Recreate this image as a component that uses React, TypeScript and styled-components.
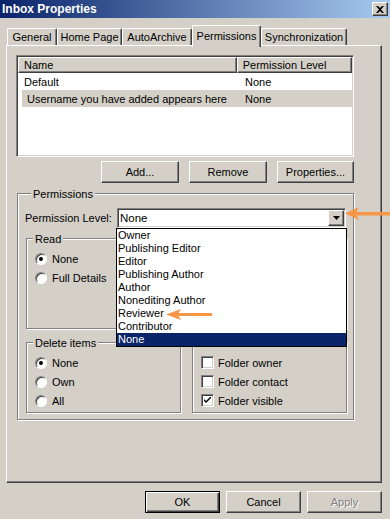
import React from 'react'
import styled, { createGlobalStyle, css } from 'styled-components'

const FACE = '#d4d0c8'
const SHADOW = '#808080'
const DARK = '#404040'
const NAVY = '#0a246a'
const ORANGE = '#f79646'

const GlobalStyle = createGlobalStyle`
  html, body {
    margin: 0;
    padding: 0;
    background: ${FACE};
  }
  body {
    font-family: "Liberation Sans", Arial, sans-serif;
    font-size: 11px;
    color: #000;
  }
`

const raised = css`
  border: 1px solid;
  border-color: #fff ${DARK} ${DARK} #fff;
  box-shadow: inset -1px -1px ${SHADOW};
  background: ${FACE};
`

const sunken = css`
  border: 1px solid;
  border-color: ${SHADOW} #fff #fff ${SHADOW};
  box-shadow: inset 1px 1px ${DARK}, inset -1px -1px ${FACE};
`

const Window = styled.div`
  position: relative;
  width: 390px;
  height: 519px;
  overflow: hidden;
  background: ${FACE};
`

const TitleBar = styled.div`
  height: 18px;
  box-sizing: border-box;
  padding: 0 2px;
  display: flex;
  align-items: center;
  justify-content: space-between;
  background: linear-gradient(90deg, ${NAVY} 0%, #a6caf0 100%);
`

const Title = styled.div`
  color: #fff;
  font-weight: bold;
  font-size: 12px;
`

const CloseBtn = styled.div`
  ${raised}
  width: 16px;
  height: 14px;
  box-sizing: border-box;
  display: flex;
  align-items: center;
  justify-content: center;
`

const TabStrip = styled.div`
  display: flex;
  align-items: flex-end;
  height: 20px;
  margin-top: 7px;
  padding-left: 7px;
`

const Tab = styled.div<{ $w: number; $active?: boolean }>`
  position: relative;
  z-index: ${p => (p.$active ? 1 : 0)};
  width: ${p => p.$w}px;
  height: ${p => (p.$active ? 22 : 17)}px;
  margin-bottom: ${p => (p.$active ? -2 : 0)}px;
  padding-bottom: ${p => (p.$active ? 2 : 0)}px;
  box-sizing: border-box;
  display: flex;
  align-items: center;
  justify-content: center;
  background: ${FACE};
  border-top: 1px solid #fff;
  border-left: 1px solid #fff;
  border-right: 1px solid ${DARK};
  box-shadow: inset -1px 0 ${SHADOW};
  border-radius: 2px 2px 0 0;
  white-space: nowrap;
`

const Panel = styled.div`
  margin-left: 6px;
  width: 376px;
  height: 438px;
  box-sizing: border-box;
  border: 1px solid;
  border-color: #fff ${DARK} ${DARK} #fff;
  box-shadow: inset -1px -1px ${SHADOW};
  padding: 9px 27px 0 9px;
`

const ListView = styled.div`
  ${sunken}
  height: 102px;
  box-sizing: border-box;
  padding: 1px;
  background: #fff;
  overflow: hidden;
`

const HeaderRow = styled.div`
  display: flex;
  height: 16px;
`

const HeaderCell = styled.div<{ $w: number }>`
  ${raised}
  width: ${p => p.$w}px;
  box-sizing: border-box;
  padding-left: 5px;
  line-height: 14px;
  white-space: nowrap;
`

const Row = styled.div<{ $selected?: boolean }>`
  display: flex;
  align-items: center;
  height: 17px;
  margin-left: ${p => (p.$selected ? 4 : 0)}px;
  background: ${p => (p.$selected ? FACE : 'transparent')};
`

const Cell = styled.div<{ $w?: number; $pad: number }>`
  width: ${p => (p.$w ? `${p.$w}px` : 'auto')};
  box-sizing: border-box;
  padding-left: ${p => p.$pad}px;
  white-space: nowrap;
`

const ButtonRow = styled.div<{ $gap: number; $top: number }>`
  display: flex;
  justify-content: flex-end;
  gap: ${p => p.$gap}px;
  margin-top: ${p => p.$top}px;
`

const Button = styled.button<{ $w: number; $default?: boolean }>`
  width: ${p => p.$w}px;
  height: 22px;
  box-sizing: border-box;
  font: inherit;
  color: ${p => (p.disabled ? SHADOW : '#000')};
  text-shadow: ${p => (p.disabled ? '1px 1px #fff' : 'none')};
  padding: 0;
  ${raised}
  ${p =>
    p.$default &&
    css`
      border: 1px solid #000;
      box-shadow: inset 1px 1px #fff, inset -1px -1px ${DARK}, inset -2px -2px ${SHADOW};
    `}
`

const GroupBox = styled.div<{ $h: number }>`
  height: ${p => p.$h}px;
  box-sizing: border-box;
  border: 1px solid ${SHADOW};
  box-shadow: inset 1px 1px #fff, 1px 1px #fff;
`

const Legend = styled.div`
  width: fit-content;
  margin: -6px 0 0 6px;
  padding: 0 2px;
  line-height: 13px;
  background: ${FACE};
  white-space: nowrap;
`

const PermGroup = styled(GroupBox)`
  margin: 10px 0 0 1px;
  padding: 0 7px;
`

const LevelRow = styled.div`
  display: flex;
  align-items: center;
  margin-top: 7px;
`

const LevelLabel = styled.div`
  width: 92px;
`

const Combo = styled.div`
  ${sunken}
  position: relative;
  width: 229px;
  height: 20px;
  box-sizing: border-box;
  background: #fff;
  display: flex;
  align-items: center;
  padding: 0 1px 0 2px;
  font-size: 11.5px;
`

const ComboButton = styled.div`
  ${raised}
  margin-left: auto;
  width: 16px;
  height: 16px;
  box-sizing: border-box;
  display: flex;
  align-items: center;
  justify-content: center;
`

const DropList = styled.div`
  position: absolute;
  z-index: 5;
  top: calc(100% + 1px);
  left: -2px;
  width: 231px;
  height: 119px;
  box-sizing: border-box;
  border: 1px solid #000;
  background: #fff;
`

const DropItem = styled.div<{ $selected?: boolean }>`
  height: 13px;
  line-height: 13px;
  padding-left: 1px;
  font-size: 11px;
  background: ${p => (p.$selected ? NAVY : 'transparent')};
  color: ${p => (p.$selected ? '#fff' : '#000')};
`

const Grid = styled.div`
  display: grid;
  grid-template-columns: 155px 155px;
  grid-template-rows: 91px 71px;
  column-gap: 11px;
  row-gap: 13px;
  margin: 10px 0 0 1px;
`

const OptionList = styled.div`
  padding-top: 3px;
`

const Option = styled.div<{ $gap: number }>`
  display: flex;
  align-items: center;
  gap: ${p => p.$gap}px;
  height: 19px;
  padding-left: 8px;
`

const Radio = styled.span<{ $on?: boolean }>`
  position: relative;
  width: 12px;
  height: 12px;
  box-sizing: border-box;
  border-radius: 50%;
  border: 1px solid;
  border-color: ${SHADOW} #fff #fff ${SHADOW};
  box-shadow: inset 1px 1px ${DARK};
  background: #fff;
  &::after {
    content: '';
    display: ${p => (p.$on ? 'block' : 'none')};
    position: absolute;
    left: 3px;
    top: 3px;
    width: 4px;
    height: 4px;
    border-radius: 50%;
    background: #000;
  }
`

const Check = styled.span`
  ${sunken}
  width: 13px;
  height: 13px;
  box-sizing: border-box;
  background: #fff;
  display: flex;
  align-items: center;
  justify-content: center;
`

const Footer = styled.div`
  display: flex;
  justify-content: flex-end;
  gap: 6px;
  margin-top: 8px;
  padding-right: 8px;
`

const Pointer = styled.svg<{ $x: number; $y: number }>`
  position: absolute;
  z-index: 10;
  left: ${p => p.$x}px;
  top: ${p => p.$y}px;
`

const levels = [
  'Owner',
  'Publishing Editor',
  'Editor',
  'Publishing Author',
  'Author',
  'Nonediting Author',
  'Reviewer',
  'Contributor',
  'None',
]

const RadioOption = ({ label, on }: { label: string; on?: boolean }) => (
  <Option $gap={5}>
    <Radio $on={on} />
    {label}
  </Option>
)

const CheckOption = ({ label, on }: { label: string; on?: boolean }) => (
  <Option $gap={4}>
    <Check>
      {on && (
        <svg width="7" height="7" viewBox="0 0 7 7">
          <path d="M0 2 L0 4 L2 6 L7 1 L7 -1 L2 4 Z" fill="#000" />
        </svg>
      )}
    </Check>
    {label}
  </Option>
)

const App = () => {
  return (
    <Window>
      <GlobalStyle />
      <TitleBar>
        <Title>Inbox Properties</Title>
        <CloseBtn>
          <svg width="8" height="7" viewBox="0 0 8 7">
            <path d="M0 0 L2 0 L4 2 L6 0 L8 0 L5 3.5 L8 7 L6 7 L4 5 L2 7 L0 7 L3 3.5 Z" fill="#000" />
          </svg>
        </CloseBtn>
      </TitleBar>

      <TabStrip>
        <Tab $w={50}>General</Tab>
        <Tab $w={65}>Home Page</Tab>
        <Tab $w={70}>AutoArchive</Tab>
        <Tab $w={69} $active>Permissions</Tab>
        <Tab $w={86}>Synchronization</Tab>
      </TabStrip>

      <Panel>
        <ListView>
          <HeaderRow>
            <HeaderCell $w={220}>Name</HeaderCell>
            <HeaderCell $w={116}>Permission Level</HeaderCell>
          </HeaderRow>
          <Row>
            <Cell $w={220} $pad={6}>Default</Cell>
            <Cell $pad={7}>None</Cell>
          </Row>
          <Row $selected>
            <Cell $w={216} $pad={5}>Username you have added appears here</Cell>
            <Cell $pad={7}>None</Cell>
          </Row>
        </ListView>

        <ButtonRow $gap={10} $top={4}>
          <Button $w={78}>Add...</Button>
          <Button $w={78}>Remove</Button>
          <Button $w={77}>Properties...</Button>
        </ButtonRow>

        <PermGroup $h={227}>
          <Legend>Permissions</Legend>
          <LevelRow>
            <LevelLabel>Permission Level:</LevelLabel>
            <Combo>
              None
              <ComboButton>
                <svg width="7" height="4" viewBox="0 0 7 4">
                  <path d="M0 0 L7 0 L3.5 4 Z" fill="#000" />
                </svg>
              </ComboButton>
              <DropList>
                {levels.map(l => (
                  <DropItem key={l} $selected={l === 'None'}>
                    {l}
                  </DropItem>
                ))}
              </DropList>
            </Combo>
          </LevelRow>

          <Grid>
            <GroupBox $h={91}>
              <Legend>Read</Legend>
              <OptionList>
                <RadioOption label="None" on />
                <RadioOption label="Full Details" />
              </OptionList>
            </GroupBox>
            <GroupBox $h={91}>
              <Legend>Write</Legend>
              <OptionList>
                <CheckOption label="Create items" />
                <CheckOption label="Create subfolders" />
                <CheckOption label="Edit own" />
                <CheckOption label="Edit all" />
              </OptionList>
            </GroupBox>
            <GroupBox $h={71}>
              <Legend>Delete items</Legend>
              <OptionList>
                <RadioOption label="None" on />
                <RadioOption label="Own" />
                <RadioOption label="All" />
              </OptionList>
            </GroupBox>
            <GroupBox $h={71}>
              <Legend>Other</Legend>
              <OptionList>
                <CheckOption label="Folder owner" />
                <CheckOption label="Folder contact" />
                <CheckOption label="Folder visible" on />
              </OptionList>
            </GroupBox>
          </Grid>
        </PermGroup>
      </Panel>

      <Footer>
        <Button $w={75} $default>OK</Button>
        <Button $w={75}>Cancel</Button>
        <Button $w={75} disabled>Apply</Button>
      </Footer>

      {/* orange annotation arrows */}
      <Pointer $x={345} $y={207} width="45" height="13" viewBox="0 0 45 13">
        <path d="M0 6.5 L14 0 L11.5 5 L45 5 L45 8.5 L11.5 8.5 L14 13 Z" fill={ORANGE} />
      </Pointer>
      <Pointer $x={166} $y={309} width="47" height="11" viewBox="0 0 47 11">
        <path d="M0 5.5 L15 0 L12.5 4 L46 4 L46 7 L12.5 7 L15 11 Z" fill={ORANGE} />
      </Pointer>
    </Window>
  )
}

export default App
